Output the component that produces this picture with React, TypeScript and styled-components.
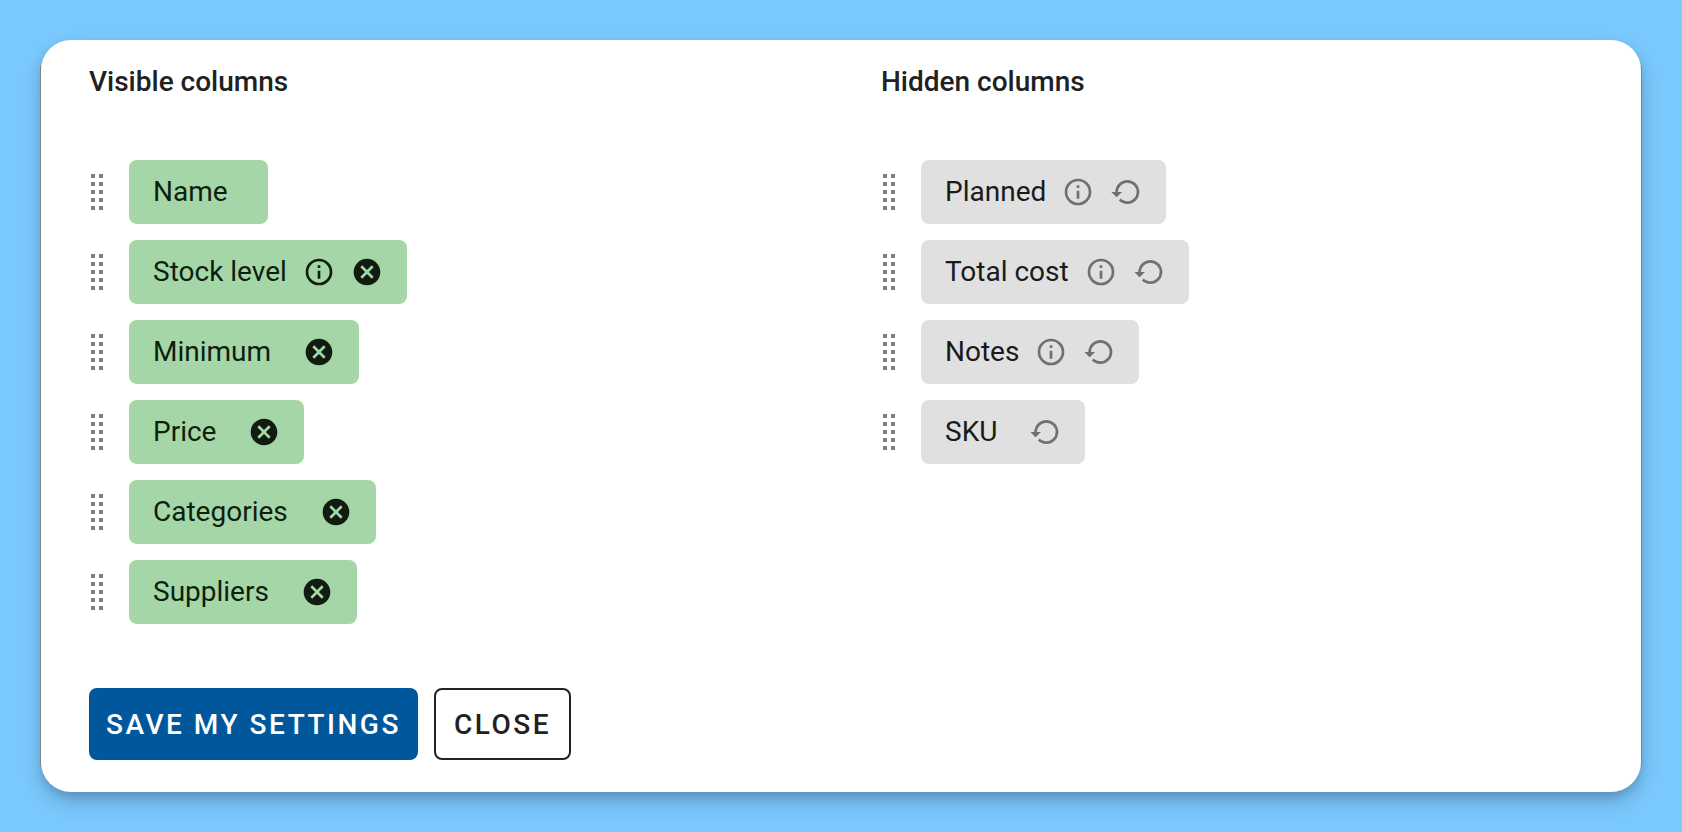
import React from "react";
import styled, { createGlobalStyle } from "styled-components";

const GlobalStyle = createGlobalStyle`
  *, *::before, *::after { box-sizing: border-box; }
  body {
    margin: 0;
    background: #7bcaff;
    color: #212121;
    font-family: Roboto, "Liberation Sans", sans-serif;
  }
`;

const Page = styled.main`
  min-height: 100vh;
  padding: 40px 41px;
`;

const Card = styled.section`
  position: relative;
  padding: 26px 48px 32px;
  border-radius: 30px;
  background: #fff;
  box-shadow:
    0 6px 12px -2px rgba(0, 0, 0, 0.2),
    0 10px 28px rgba(0, 0, 0, 0.16);

  /* Hairlines along the straight part of both sides */
  &::before {
    content: "";
    position: absolute;
    inset: 26px -1px;
    border: solid #808487;
    border-width: 0 1px;
    pointer-events: none;
  }
`;

const Groups = styled.div`
  display: grid;
  grid-template-columns: 1fr 1fr;
  column-gap: 80px;
`;

const Heading = styled.h2`
  margin: 0 0 62px;
  font-size: 28px;
  font-weight: 500;
  line-height: 32px;
`;

const List = styled.ul`
  display: flex;
  flex-direction: column;
  gap: 16px;
  margin: 0;
  padding: 0;
  list-style: none;
`;

const Row = styled.li`
  display: flex;
  align-items: center;
`;

const Handle = styled.button`
  display: flex;
  width: 40px;
  padding: 0 2px;
  border: 0;
  background: none;
  color: #808080;
  cursor: grab;
`;

const Chip = styled.div<{ $hidden: boolean }>`
  display: flex;
  align-items: center;
  gap: 16px;
  height: 64px;
  padding: 0 24px;
  border-radius: 8px;
  background: ${(p) => (p.$hidden ? "#e0e0e0" : "#a5d6a7")};
  color: ${(p) => (p.$hidden ? "#1a1a1a" : "#0d1f0e")};
  font-size: 28px;
  line-height: 40px;
`;

const InfoSlot = styled.span<{ $hidden: boolean }>`
  display: flex;
  color: ${(p) => (p.$hidden ? "#707070" : "#111c11")};
`;

const IconButton = styled.button<{ $hidden: boolean }>`
  display: flex;
  padding: 0;
  border: 0;
  background: none;
  color: ${(p) => (p.$hidden ? "#707070" : "#111c11")};
  cursor: pointer;
`;

const Actions = styled.div`
  display: flex;
  gap: 16px;
  margin-top: 64px;
`;

const Button = styled.button<{ $primary?: boolean }>`
  height: 72px;
  padding: 0 ${(p) => (p.$primary ? "17px" : "18px")};
  border: ${(p) => (p.$primary ? "0" : "2px solid #212121")};
  border-radius: 8px;
  background: ${(p) => (p.$primary ? "#01579b" : "#fff")};
  color: ${(p) => (p.$primary ? "#fff" : "#212121")};
  font-family: inherit;
  font-size: 28px;
  font-weight: 500;
  letter-spacing: 0.09em;
  text-transform: uppercase;
  cursor: pointer;
`;

const DragIcon = () => (
  <svg width="12" height="36" viewBox="0 0 12 36" fill="currentColor" aria-hidden="true">
    {[0, 8, 16, 24, 32].map((y) => (
      <React.Fragment key={y}>
        <rect x="0" y={y} width="4" height="4" />
        <rect x="8" y={y} width="4" height="4" />
      </React.Fragment>
    ))}
  </svg>
);

const InfoIcon = () => (
  <svg width="32" height="32" viewBox="0 0 24 24" fill="currentColor" role="img" aria-label="Info">
    <path d="M11,9H13V7H11M12,20C7.59,20 4,16.41 4,12C4,7.59 7.59,4 12,4C16.41,4 20,7.59 20,12C20,16.41 16.41,20 12,20M12,2A10,10 0 0,0 2,12A10,10 0 0,0 12,22A10,10 0 0,0 22,12A10,10 0 0,0 12,2M11,17H13V11H11V17Z" />
  </svg>
);

const RemoveIcon = () => (
  <svg width="32" height="32" viewBox="0 0 24 24" fill="currentColor" aria-hidden="true">
    <path d="M12,2C17.53,2 22,6.47 22,12C22,17.53 17.53,22 12,22C6.47,22 2,17.53 2,12C2,6.47 6.47,2 12,2M15.59,7L12,10.59L8.41,7L7,8.41L10.59,12L7,15.59L8.41,17L12,13.41L15.59,17L17,15.59L13.41,12L17,8.41L15.59,7Z" />
  </svg>
);

const RestoreIcon = () => (
  <svg width="32" height="32" viewBox="0 0 24 24" fill="currentColor" aria-hidden="true">
    <path d="M13,3A9,9 0 0,0 4,12H1L4.89,15.89L4.96,16.03L9,12H6A7,7 0 0,1 13,5A7,7 0 0,1 20,12A7,7 0 0,1 13,19C11.07,19 9.32,18.21 8.06,16.94L6.64,18.36C8.27,20 10.5,21 13,21A9,9 0 0,0 22,12A9,9 0 0,0 13,3Z" />
  </svg>
);

type Column = { name: string; info?: boolean; fixed?: boolean };

const visibleColumns: Column[] = [
  { name: "Name", fixed: true },
  { name: "Stock level", info: true },
  { name: "Minimum" },
  { name: "Price" },
  { name: "Categories" },
  { name: "Suppliers" },
];

const hiddenColumns: Column[] = [
  { name: "Planned", info: true },
  { name: "Total cost", info: true },
  { name: "Notes", info: true },
  { name: "SKU" },
];

function ColumnGroup({ title, columns, hidden = false }: { title: string; columns: Column[]; hidden?: boolean }) {
  return (
    <div>
      <Heading>{title}</Heading>
      <List>
        {columns.map((column) => (
          <Row key={column.name}>
            <Handle type="button" aria-label={`Move ${column.name}`}>
              <DragIcon />
            </Handle>
            <Chip $hidden={hidden}>
              <span>{column.name}</span>
              <InfoSlot $hidden={hidden}>{column.info && <InfoIcon />}</InfoSlot>
              {!column.fixed && (
                <IconButton
                  type="button"
                  $hidden={hidden}
                  aria-label={`${hidden ? "Show" : "Hide"} ${column.name}`}
                >
                  {hidden ? <RestoreIcon /> : <RemoveIcon />}
                </IconButton>
              )}
            </Chip>
          </Row>
        ))}
      </List>
    </div>
  );
}

export default function App() {
  return (
    <>
      <GlobalStyle />
      <Page>
        <Card>
          <Groups>
            <ColumnGroup title="Visible columns" columns={visibleColumns} />
            <ColumnGroup title="Hidden columns" columns={hiddenColumns} hidden />
          </Groups>
          <Actions>
            <Button type="button" $primary>Save my settings</Button>
            <Button type="button">Close</Button>
          </Actions>
        </Card>
      </Page>
    </>
  );
}
